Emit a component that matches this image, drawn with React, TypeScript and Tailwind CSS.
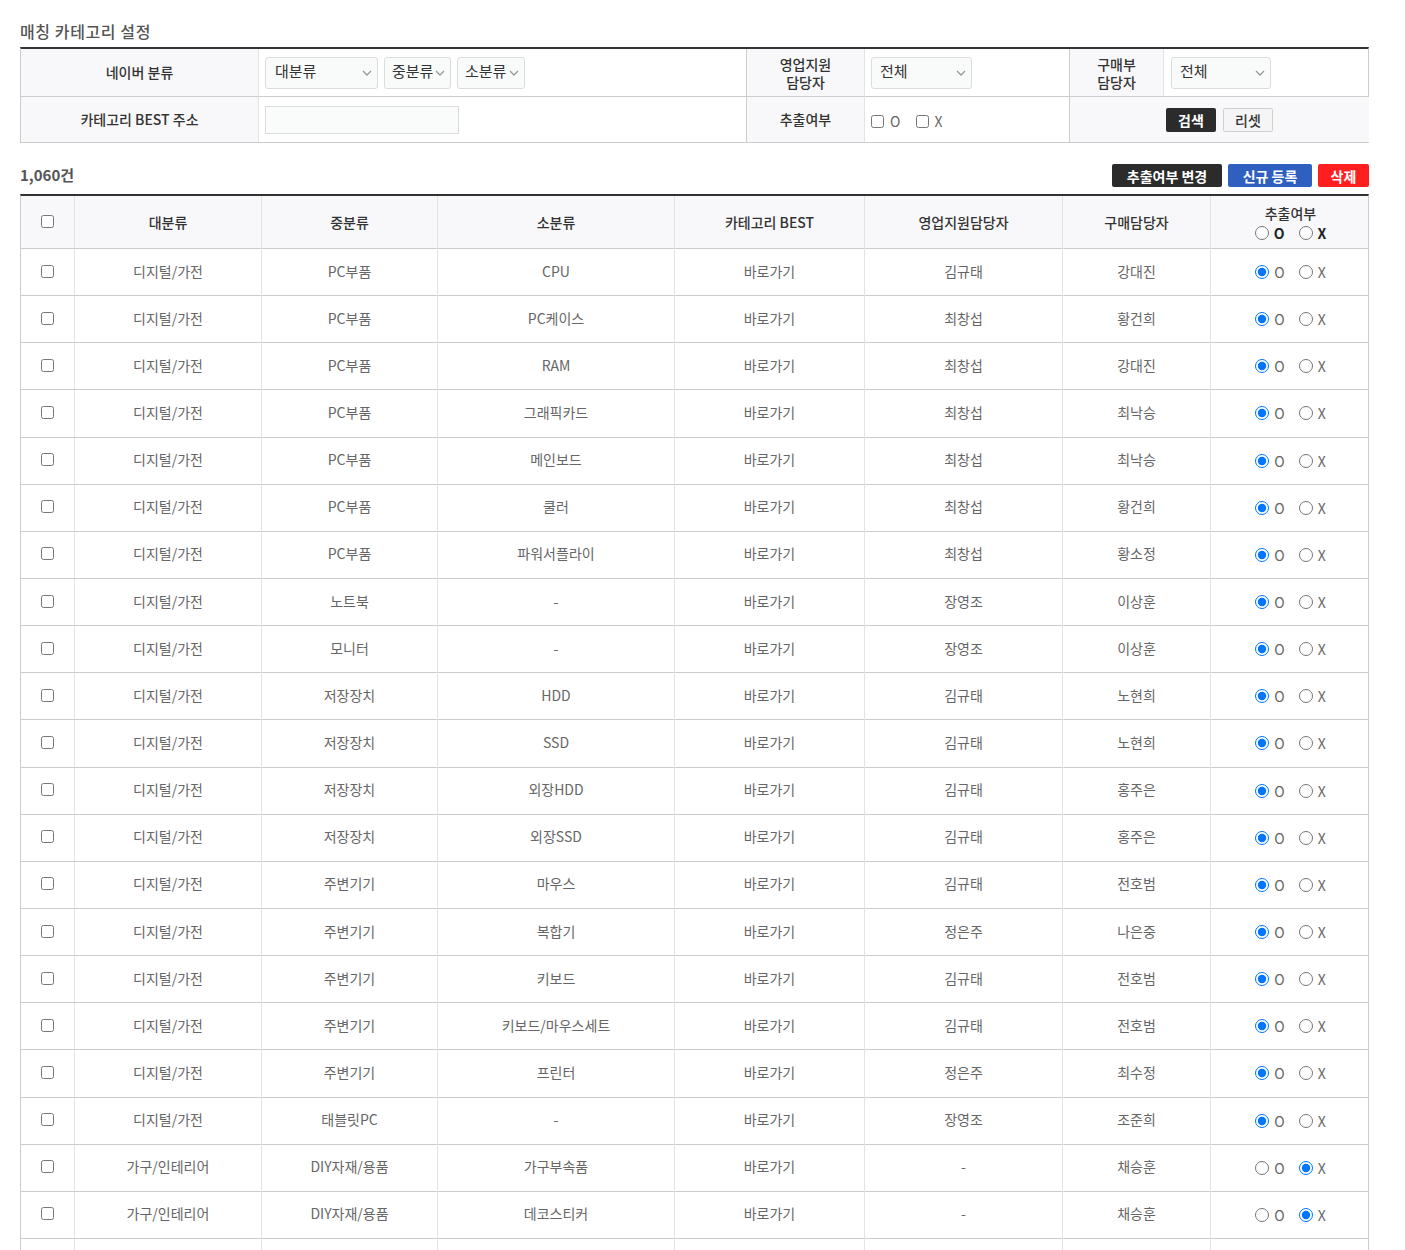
import React from "react";

type Row = [string, string, string, string, string, "O" | "X"];

const rows: Row[] = [
  ["디지털/가전", "PC부품", "CPU", "김규태", "강대진", "O"],
  ["디지털/가전", "PC부품", "PC케이스", "최창섭", "황건희", "O"],
  ["디지털/가전", "PC부품", "RAM", "최창섭", "강대진", "O"],
  ["디지털/가전", "PC부품", "그래픽카드", "최창섭", "최낙승", "O"],
  ["디지털/가전", "PC부품", "메인보드", "최창섭", "최낙승", "O"],
  ["디지털/가전", "PC부품", "쿨러", "최창섭", "황건희", "O"],
  ["디지털/가전", "PC부품", "파워서플라이", "최창섭", "황소정", "O"],
  ["디지털/가전", "노트북", "-", "장영조", "이상훈", "O"],
  ["디지털/가전", "모니터", "-", "장영조", "이상훈", "O"],
  ["디지털/가전", "저장장치", "HDD", "김규태", "노현희", "O"],
  ["디지털/가전", "저장장치", "SSD", "김규태", "노현희", "O"],
  ["디지털/가전", "저장장치", "외장HDD", "김규태", "홍주은", "O"],
  ["디지털/가전", "저장장치", "외장SSD", "김규태", "홍주은", "O"],
  ["디지털/가전", "주변기기", "마우스", "김규태", "전호범", "O"],
  ["디지털/가전", "주변기기", "복합기", "정은주", "나은중", "O"],
  ["디지털/가전", "주변기기", "키보드", "김규태", "전호범", "O"],
  ["디지털/가전", "주변기기", "키보드/마우스세트", "김규태", "전호범", "O"],
  ["디지털/가전", "주변기기", "프린터", "정은주", "최수정", "O"],
  ["디지털/가전", "태블릿PC", "-", "장영조", "조준희", "O"],
  ["가구/인테리어", "DIY자재/용품", "가구부속품", "-", "채승훈", "X"],
  ["가구/인테리어", "DIY자재/용품", "데코스티커", "-", "채승훈", "X"],
  ["가구/인테리어", "DIY자재/용품", "도어/문고리", "-", "채승훈", "X"],
];

const Chevron = () => (
  <svg width="10" height="6" viewBox="0 0 10 6" className="shrink-0">
    <path d="M1 1l4 4 4-4" fill="none" stroke="#999" strokeWidth="1.3" />
  </svg>
);

const Select = ({ label, w, pad }: { label: string; w: string; pad: string }) => (
  <div
    className={`${w} h-[32px] flex items-center justify-between ${pad} pr-[5px] bg-[#f9fafa] border border-[#dcdcdc] rounded-[3px] text-[15px] text-[#333]`}
  >
    <span className="leading-none -mt-[4px]">{label}</span>
    <Chevron />
  </div>
);

const grid =
  "grid grid-cols-[54px_187px_176px_237px_190px_198px_148px_159px]";

export default function App() {
  return (
    <div
      className="w-[1405px] bg-white px-[20px] pt-[19px] pb-4 text-[14px] text-[#333]"
      style={{ fontFamily: '"Noto Sans CJK KR", "Noto Sans", sans-serif' }}
    >
      <div className="w-[1349px]">
        <h1 className="text-[16px] leading-[24px] text-[#555] font-medium tracking-[0.6px] mb-[4px]">
          매칭 카테고리 설정
        </h1>

        {/* filter table */}
        <div className="border-t-2 border-[#333] border-x border-b border-x-[#ccc] border-b-[#ccc] grid grid-cols-[238px_488px_118px_205px_94px_205px]">
          <div className="h-[47px] bg-[#f8f8fa] border-r border-[#e3e3e3] flex items-center justify-center font-medium">
            네이버 분류
          </div>
          <div className="h-[47px] border-r border-[#ccc] flex items-center pl-[6px] gap-[6px]">
            <Select label="대분류" w="w-[113px]" pad="pl-[9px]" />
            <Select label="중분류" w="w-[67px]" pad="pl-[7px]" />
            <Select label="소분류" w="w-[68px]" pad="pl-[7px]" />
          </div>
          <div className="h-[47px] bg-[#f8f8fa] border-r border-[#e3e3e3] flex items-center justify-center text-center font-medium leading-[18px]">
            영업지원
            <br />
            담당자
          </div>
          <div className="h-[47px] border-r border-[#ccc] flex items-center pl-[6px]">
            <Select label="전체" w="w-[101px]" pad="pl-[8px]" />
          </div>
          <div className="h-[47px] bg-[#f8f8fa] border-r border-[#e3e3e3] flex items-center justify-center text-center font-medium leading-[18px]">
            구매부
            <br />
            담당자
          </div>
          <div className="h-[47px] flex items-center pl-[7px]">
            <Select label="전체" w="w-[100px]" pad="pl-[8px]" />
          </div>

          <div className="h-[46px] bg-[#f8f8fa] border-t border-r border-[#ccc] border-r-[#e3e3e3] flex items-center justify-center font-medium">
            카테고리 BEST 주소
          </div>
          <div className="h-[46px] border-t border-r border-[#ccc] flex items-center pl-[6px]">
            <div className="w-[194px] h-[28px] bg-[#fafbfb] border border-[#dcdcdc]" />
          </div>
          <div className="h-[46px] bg-[#f8f8fa] border-t border-r border-[#ccc] border-r-[#e3e3e3] flex items-center justify-center font-medium">
            추출여부
          </div>
          <div className="h-[46px] border-t border-r border-[#ccc] flex items-center pl-[6px] text-[#666]">
            <label className="flex items-center gap-[6px] mt-[3px]">
              <input type="checkbox" className="m-0 w-[13px] h-[13px]" />
              <span className="leading-none">O</span>
            </label>
            <label className="flex items-center gap-[5px] ml-[16px] mt-[3px]">
              <input type="checkbox" className="m-0 w-[13px] h-[13px]" />
              <span className="leading-none">X</span>
            </label>
          </div>
          <div className="col-span-2 h-[46px] bg-[#f8f8fa] border-t border-[#ccc] flex items-center justify-center gap-[7px]">
            <button className="w-[50px] h-[24px] bg-[#2b2b2b] text-white font-bold rounded-[2px] text-[14px] leading-none">
              검색
            </button>
            <button className="w-[50px] h-[24px] bg-[#f5f5f5] border border-[#d0d0d0] text-[#333] font-medium rounded-[2px] text-[14px] leading-none">
              리셋
            </button>
          </div>
        </div>

        {/* count + actions */}
        <div className="mt-[21px] mb-[7px] h-[23px] flex items-center justify-between">
          <div className="font-bold text-[#555] text-[15px]">1,060건</div>
          <div className="flex gap-[6px]">
            <button className="w-[110px] h-[23px] bg-[#2b2b2b] text-white font-bold rounded-[2px] text-[14px] leading-none">
              추출여부 변경
            </button>
            <button className="w-[84px] h-[23px] bg-[#2f5fbf] text-white font-bold rounded-[2px] text-[14px] leading-none">
              신규 등록
            </button>
            <button className="w-[51px] h-[23px] bg-[#ff1f1f] text-white font-bold rounded-[2px] text-[14px] leading-none">
              삭제
            </button>
          </div>
        </div>

        {/* main table */}
        <div className="border-t-2 border-[#333] border-x border-x-[#ccc]">
          <div className={`${grid} h-[53px] bg-[#f8f8fa] border-b border-[#ccc] font-medium text-[#333]`}>
            <div className="flex items-center justify-center border-r border-[#e3e3e3]">
              <input type="checkbox" className="m-0 w-[13px] h-[13px] -mt-[2px]" />
            </div>
            {["대분류", "중분류", "소분류", "카테고리 BEST", "영업지원담당자", "구매담당자"].map((h) => (
              <div key={h} className="flex items-center justify-center border-r border-[#e3e3e3]">
                {h}
              </div>
            ))}
            <div className="flex flex-col items-center justify-center gap-[3px]">
              <div className="leading-[18px]">추출여부</div>
              <div className="flex items-center font-bold text-[#222] h-[16px]">
                <input type="radio" name="hd" className="m-0 w-[14px] h-[14px]" />
                <span className="ml-[5px] leading-none">O</span>
                <input type="radio" name="hd" className="m-0 ml-[14px] w-[14px] h-[14px]" />
                <span className="ml-[5px] leading-none">X</span>
              </div>
            </div>
          </div>

          {rows.map((r, i) => (
            <div key={i} className={`${grid} h-[47.15px] border-b border-[#ccc] text-[#666]`}>
              <div className="flex items-center justify-center border-r border-[#e3e3e3]">
                <input type="checkbox" className="m-0 w-[13px] h-[13px] -mt-[2px]" />
              </div>
              <div className="flex items-center justify-center border-r border-[#e3e3e3] -mt-[2px]">{r[0]}</div>
              <div className="flex items-center justify-center border-r border-[#e3e3e3] -mt-[2px]">{r[1]}</div>
              <div className="flex items-center justify-center border-r border-[#e3e3e3] -mt-[2px]">{r[2]}</div>
              <div className="flex items-center justify-center border-r border-[#e3e3e3] -mt-[2px]">바로가기</div>
              <div className="flex items-center justify-center border-r border-[#e3e3e3] -mt-[2px]">{r[3]}</div>
              <div className="flex items-center justify-center border-r border-[#e3e3e3] -mt-[2px]">{r[4]}</div>
              <div className="flex items-center justify-center">
                <input
                  type="radio"
                  name={`r${i}`}
                  defaultChecked={r[5] === "O"}
                  className="m-0 w-[14px] h-[14px]"
                />
                <span className="ml-[5px] leading-none">O</span>
                <input
                  type="radio"
                  name={`r${i}`}
                  defaultChecked={r[5] === "X"}
                  className="m-0 ml-[14px] w-[14px] h-[14px]"
                />
                <span className="ml-[5px] leading-none">X</span>
              </div>
            </div>
          ))}
        </div>
      </div>
    </div>
  );
}
